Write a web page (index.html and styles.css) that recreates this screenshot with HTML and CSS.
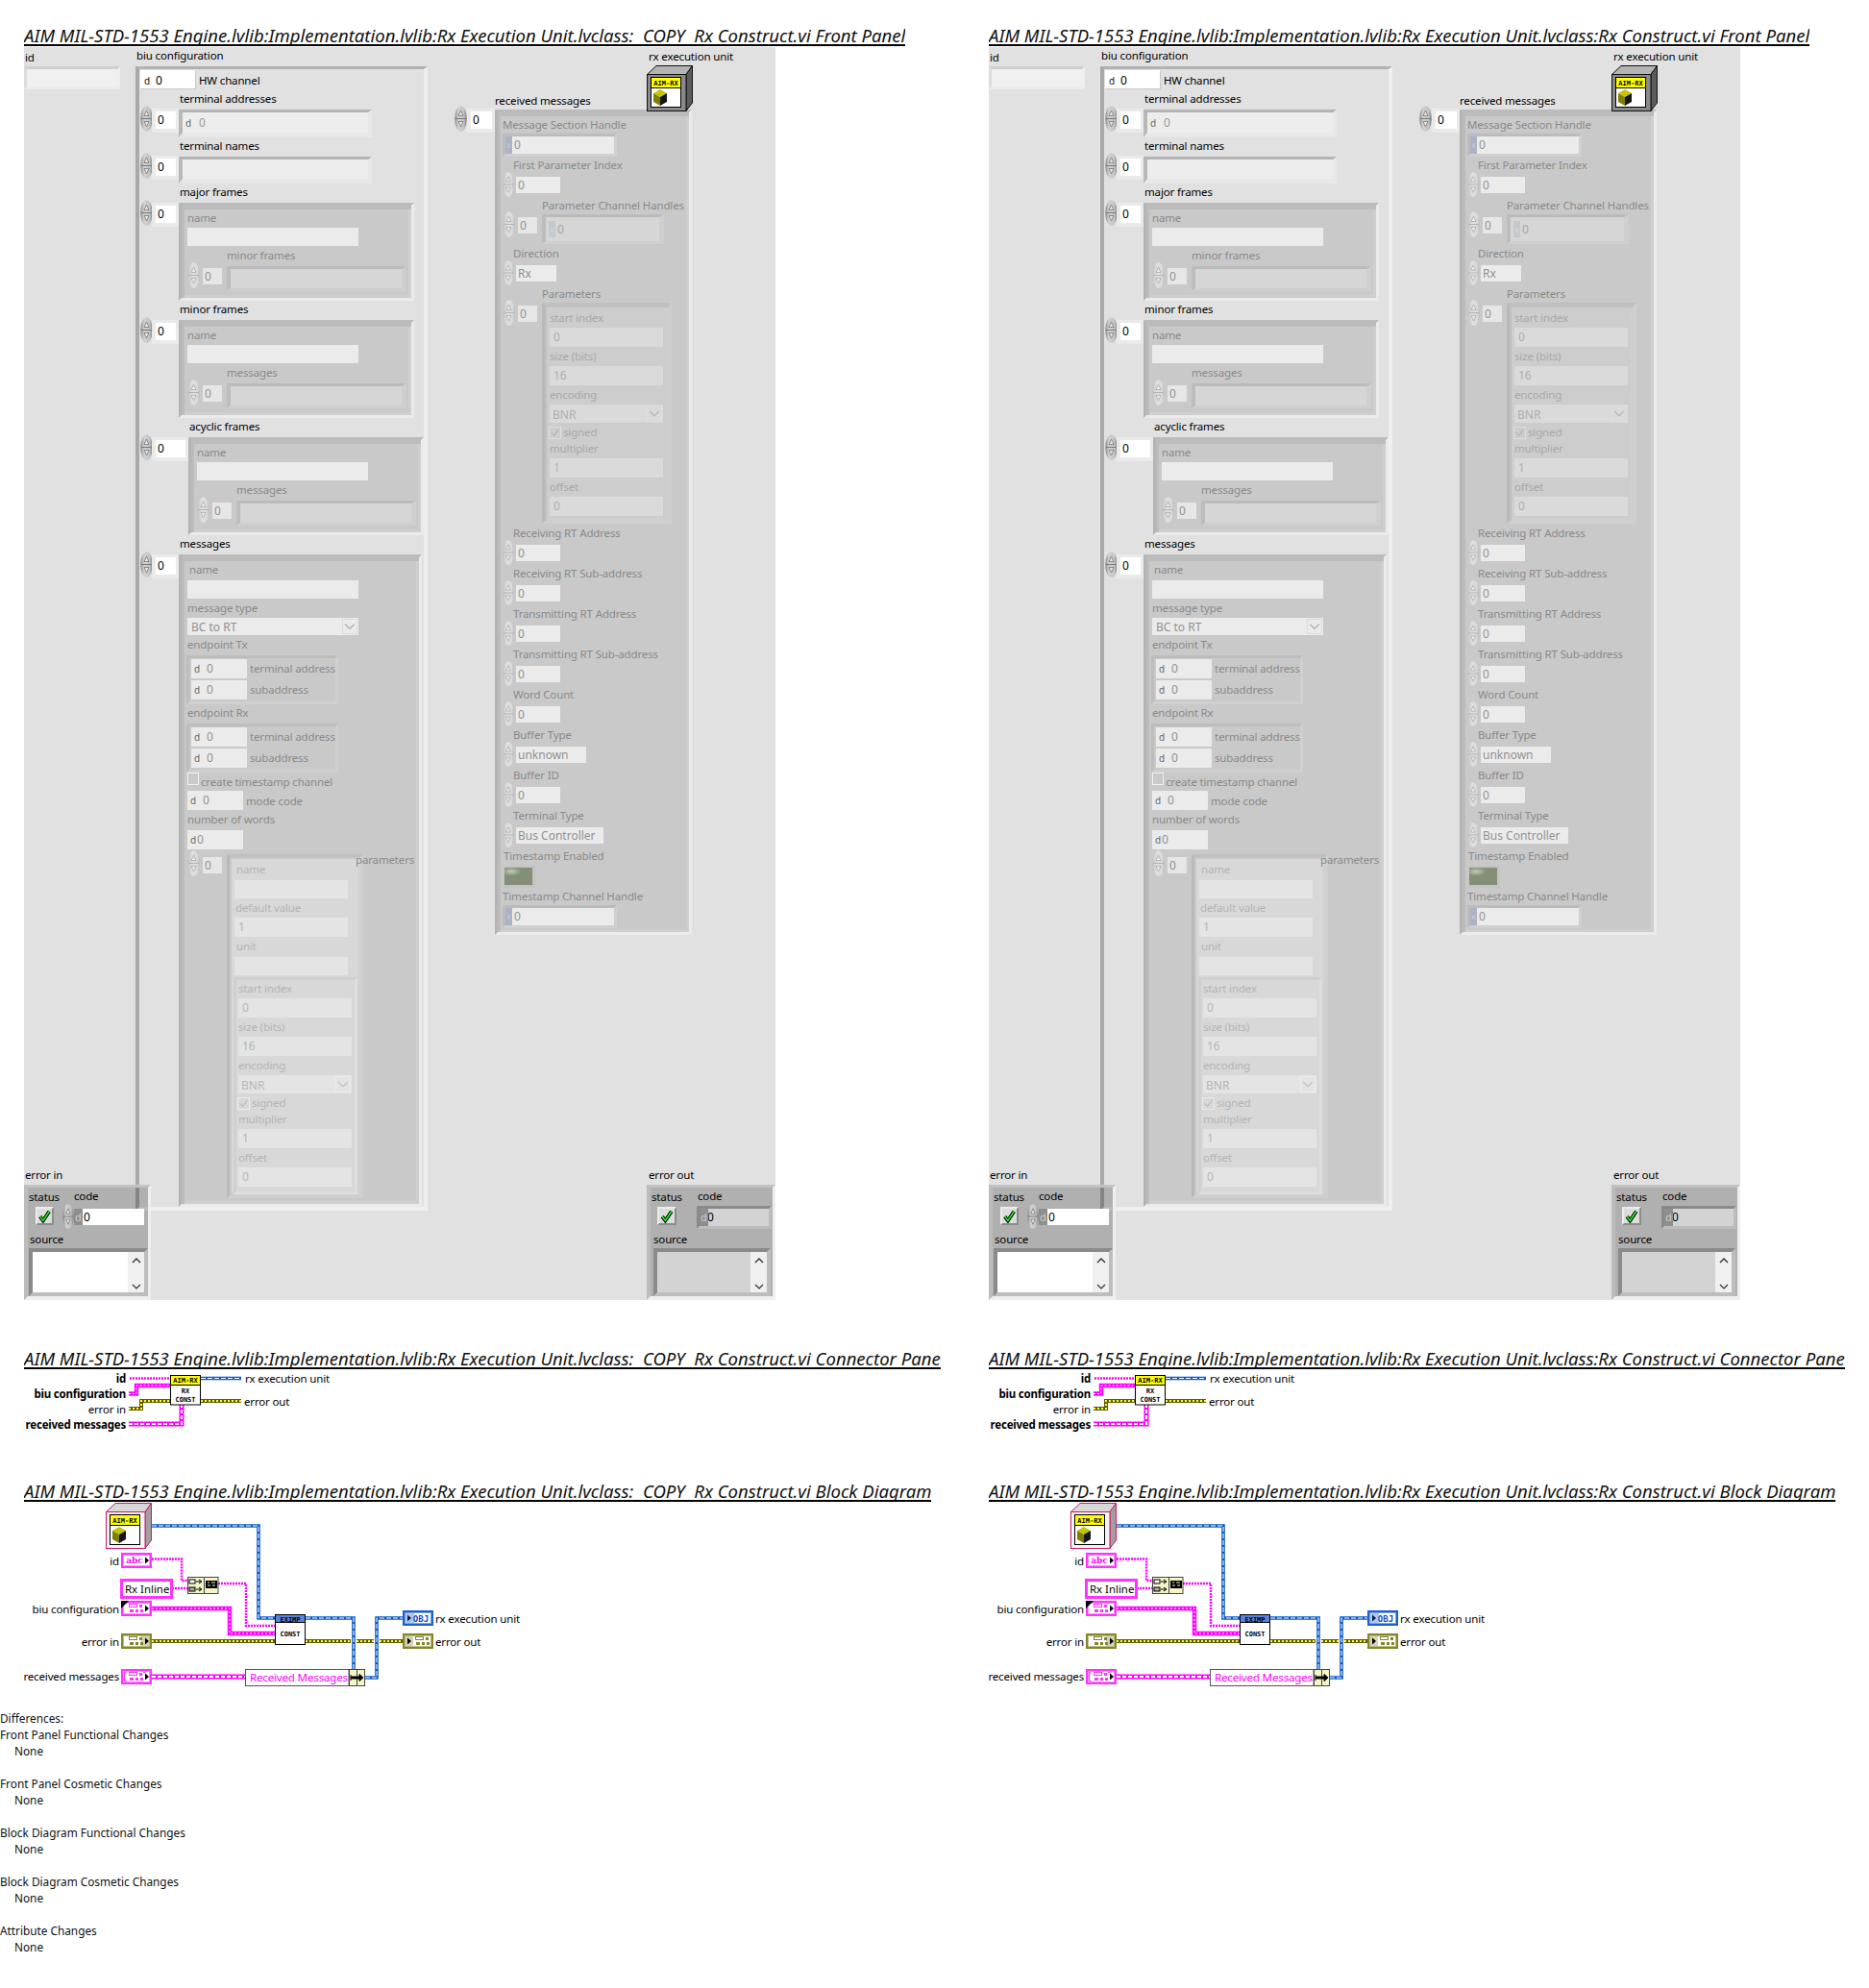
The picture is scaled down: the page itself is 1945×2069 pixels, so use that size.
FILE: index.html
```html
<!DOCTYPE html>
<html lang="en">
<head>
<meta charset="utf-8">
<title>VI comparison</title>
<link rel="stylesheet" href="styles.css">
</head>
<body>
<svg class="defs" width="0" height="0" aria-hidden="true">
  <defs>
    <linearGradient id="g-spin" x1="0" x2="1" y1="0" y2="0"><stop offset="0" stop-color="#8a8a8a"/><stop offset=".3" stop-color="#d2d2d2"/><stop offset=".75" stop-color="#c4c4c4"/><stop offset="1" stop-color="#7c7c7c"/></linearGradient>
    <linearGradient id="g-spin-d" x1="0" x2="1" y1="0" y2="0"><stop offset="0" stop-color="#c2c2c2"/><stop offset=".4" stop-color="#e0e0e0"/><stop offset=".8" stop-color="#dadada"/><stop offset="1" stop-color="#bcbcbc"/></linearGradient>
    <symbol id="spin" viewBox="0 0 13 27" preserveAspectRatio="none">
      <ellipse cx="6.5" cy="13.5" rx="6.3" ry="13.3" fill="url(#g-spin)"/>
      <path d="M1 13.5H12" stroke="#7a7a7a"/>
      <path d="M4 10.5L6.5 5 9 10.5Z" fill="#e6e6e6" stroke="#777" stroke-width=".8"/>
      <path d="M4 16.5L6.5 22 9 16.5Z" fill="#e6e6e6" stroke="#777" stroke-width=".8"/>
    </symbol>
    <symbol id="spin-d" viewBox="0 0 13 27" preserveAspectRatio="none">
      <ellipse cx="6.5" cy="13.5" rx="6.3" ry="13.3" fill="url(#g-spin-d)"/>
      <path d="M1 13.5H12" stroke="#b4b4b4"/>
      <path d="M4 10.5L6.5 5 9 10.5Z" fill="#ececec" stroke="#aaa" stroke-width=".8"/>
      <path d="M4 16.5L6.5 22 9 16.5Z" fill="#ececec" stroke="#aaa" stroke-width=".8"/>
    </symbol>
    <symbol id="aim" viewBox="0 0 32 32">
      <rect x=".5" y=".5" width="31" height="31" fill="#fff" stroke="#000"/>
      <rect x="1" y="1" width="30" height="10" fill="#ff0"/>
      <path d="M0 11.5H32" stroke="#000"/>
      <text x="16" y="8.6" class="pix" text-anchor="middle">AIM-RX</text>
      <path d="M10 13L17 17 10 21 3 17Z" fill="#c4c400"/>
      <path d="M3 17L10 21V30L3 26Z" fill="#808000"/>
      <path d="M17 17L10 21V30L17 26Z" fill="#141414"/>
    </symbol>
    <symbol id="chev-d" viewBox="0 0 12 8"><path d="M2 2L6 6 10 2" fill="none" stroke="currentColor" stroke-width="1.2"/></symbol>
    <symbol id="chev-u" viewBox="0 0 12 8"><path d="M2 6L6 2 10 6" fill="none" stroke="currentColor" stroke-width="1.4"/></symbol>
    <symbol id="tick" viewBox="0 0 14 14"><path d="M2.5 7.5L5.5 11.5 11.5 2.5" fill="none" stroke="#000" stroke-width="3.4"/><path d="M2.5 7.5L5.5 11.5 11.5 2.5" fill="none" stroke="#22e622" stroke-width="1.6"/></symbol>
    <symbol id="tick-d" viewBox="0 0 14 14"><path d="M2.5 7L6 11 12 2.5" fill="none" stroke="currentColor" stroke-width="1.2"/></symbol>
  </defs>
</svg>

<main class="compare">
  <section class="vi">
    <h2 class="vi-title vi-title-first"><span>AIM MIL-STD-1553 Engine.lvlib:Implementation.lvlib:Rx Execution Unit.lvclass:  COPY  Rx Construct.vi Front Panel</span></h2>
    <div class="front-panel"></div>
    <h2 class="vi-title vi-title-cp"><span>AIM MIL-STD-1553 Engine.lvlib:Implementation.lvlib:Rx Execution Unit.lvclass:  COPY  Rx Construct.vi Connector Pane</span></h2>
    <div class="connector-pane"></div>
    <h2 class="vi-title"><span>AIM MIL-STD-1553 Engine.lvlib:Implementation.lvlib:Rx Execution Unit.lvclass:  COPY  Rx Construct.vi Block Diagram</span></h2>
    <div class="block-diagram"></div>
  </section>
  <section class="vi">
    <h2 class="vi-title vi-title-first"><span>AIM MIL-STD-1553 Engine.lvlib:Implementation.lvlib:Rx Execution Unit.lvclass:Rx Construct.vi Front Panel</span></h2>
    <div class="front-panel"></div>
    <h2 class="vi-title vi-title-cp"><span>AIM MIL-STD-1553 Engine.lvlib:Implementation.lvlib:Rx Execution Unit.lvclass:Rx Construct.vi Connector Pane</span></h2>
    <div class="connector-pane"></div>
    <h2 class="vi-title"><span>AIM MIL-STD-1553 Engine.lvlib:Implementation.lvlib:Rx Execution Unit.lvclass:Rx Construct.vi Block Diagram</span></h2>
    <div class="block-diagram"></div>
  </section>
</main>

<section class="diff">
  <p class="diff-head">Differences:</p>
  <p>Front Panel Functional Changes<br><span class="diff-none">None</span></p>
  <p>Front Panel Cosmetic Changes<br><span class="diff-none">None</span></p>
  <p>Block Diagram Functional Changes<br><span class="diff-none">None</span></p>
  <p>Block Diagram Cosmetic Changes<br><span class="diff-none">None</span></p>
  <p>Attribute Changes<br><span class="diff-none">None</span></p>
</section>
<script src="app.js"></script>
</body>
</html>
```
FILE: styles.css
```css
* { box-sizing: border-box; }
html, body { margin: 0; background: #fff; }
body { font-family: "Noto Sans", "Open Sans", sans-serif; color: #000; }
.defs { position: absolute; }

.compare { display: grid; grid-template-columns: 1004px 1fr; padding-left: 25px; }
.vi { min-width: 0; }

.vi-title { margin: 0 0 1px; height: 25px; font-size: 18.55px; font-weight: 400; font-style: italic; line-height: 28px; white-space: pre; color: #111; }
.vi-title span { display: inline-block; height: 25px; border-bottom: 2px solid #000; overflow: hidden; }
.vi-title-first { margin-top: 23px; }
.vi-title-cp { margin-top: 47px; }

.front-panel { position: relative; width: 782px; height: 1304px; background: #e1e1e1; }
.connector-pane { height: 112px; }
.block-diagram { height: 202px; }
.connector-pane svg, .block-diagram svg { display: block; overflow: visible; }

/* LabVIEW front panel: a free canvas */
.lbl, .box, .spin, .use { position: absolute; }
.lbl { height: 16px; font-size: 11.5px; letter-spacing: -.15px; line-height: 16px; white-space: nowrap; }
.t0 { color: #000; }
.t1 { color: #8a8a8a; }
.t2 { color: #b4b4b4; }
.t3 { color: #a8a8a8; }
.box { font-size: 12px; white-space: nowrap; overflow: hidden; }
.radix { position: absolute; top: 0; left: 3px; font-size: 10px; color: #666; }
.num-w .radix { color: #111; }

.str-ind { border: 3px solid; border-color: #cfcfcf #eeeeee #ececec #dcdcdc; background: #f0f0f0; }
.biu { border: solid; border-width: 3px 4px 4px 4px; border-color: #b2b2b2 #efefef #efefef #a9a9a9; }
.num-w { background: #fff; border: 1px solid; border-color: #fff #c8c8c8 #c8c8c8 #fff; color: #000; }
.idx { border: solid; border-width: 3px 3px 4px 4px; border-color: #eaeaea; background: #fff; color: #000; }
.elem { border: solid; border-width: 3px 4px 5px 4px; border-color: #b4b4b4 #e8e8e8 #e8e8e8 #b8b8b8; background: #ededed; color: #999; }
.cl { border: 3px solid; border-color: #bbbbbb #ebebeb #ebebeb #b4b4b4; background: #c9c9c9; box-shadow: inset 3px 4px 0 #bcbcbc, inset -3px -3px 0 #cfcfcf; }
.fld { background: #ebebeb; color: #919191; }
.ring-text { padding-top: 1px; }
.fld-d { background: #d6d6d6; color: #a6a6a6; }
.sub-elem { border: solid; border-width: 3px 5px 3px 4px; border-color: #bbbbbb #cfcfcf #cfcfcf #bdbdbd; background: #d6d6d6; }
.idx-t1 { background: #e6e6e6; color: #919191; }
.group { border: 3px solid; border-color: #bdbdbd #d0d0d0 #d0d0d0 #bdbdbd; background: #c9c9c9; }
.chk { border: 1px solid #f0f0f0; background: transparent; }
.ring-btn { border: 1px solid #dddddd; background: #ebebeb; color: #b0b0b0; }
.num-frame { border: 3px solid; border-color: #bcbcbc #d0d0d0 #d0d0d0 #bcbcbc; background: #ebebeb; color: #919191; }
.hexp { position: absolute; left: 0; top: 0; bottom: 0; width: 7px; background: #aab2c4; color: #ccd; font-size: 9px; text-align: center; }
.hexp-d { background: #c4c8d0; color: #d8d8dc; }

.par-frame { border: 3px solid; border-color: #bfbfbf #cfcfcf #cfcfcf #b9b9b9; background: #d8d8d8; box-shadow: inset 2px 2px 0 #c8c8c8, inset -3px -3px 0 #d2d2d2; }
.par-inner { border: 3px solid; border-color: #d0d0d0 #dedede #dedede #d0d0d0; background: #d8d8d8; }
.par-fld { background: #e4e4e4; color: #b6b6b6; }
.par-chk { border: 1px solid #ececec; color: #b0b0b0; }
.par-btn { border: 1px solid #ececec; background: #e4e4e4; color: #c4c4c4; }
.rcv-frame { background: #cdcdcd; box-shadow: inset 2px 2px 0 #c0c0c0, inset -3px -3px 0 #cfcfcf; }
.rcv-fld { background: #dadada; color: #aeaeae; }
.rcv-chk { border-color: #dedede; color: #a8a8a8; }
.rcv-btn { background: #dadada; border-color: #dedede; color: #b8b8b8; }

.led-frame { background: #c3c3c3; }
.led { background: radial-gradient(ellipse 12px 5px at 7px 4px, #c2ccb8, #838f76 90%); }

.err { border: solid; border-width: 3px 3px 4px 4px; border-color: #c2c2c2 #efefef #efefef #bcbcbc; background: rgba(0, 0, 0, .215); background-clip: padding-box; }
.stat { border: 2px solid; border-color: #ededed #8c8c8c #8c8c8c #ededed; background: #dcdcdc; }
.code-w { background: #fff; color: #000; }
.code-p { position: absolute; left: 0; top: 0; bottom: 0; width: 9px; background: #8e8e8e; color: #cfcfcf; font-size: 11px; text-align: center; }
.code-f { border: 3px solid; border-color: #8a8a8a #bcbcbc #bcbcbc #8a8a8a; background: #d3d3d3; color: #000; }
.src { border: 4px solid; border-color: #8a8a8a #bdbdbd #bdbdbd #8a8a8a; background: #fff; }
.src-out { background: #d3d3d3; }
.src-bar { position: absolute; right: 0; top: 0; bottom: 0; width: 17px; background: #f0f0f0; color: #333; }
.src-bar svg { position: absolute; left: 3px; width: 12px; height: 8px; }
.src-bar .up { top: 5px; }
.src-bar .dn { bottom: 2px; }
.use { display: block; }
.fill { width: 100%; height: 100%; display: block; }

/* Wires and nodes */
.pix { font: 700 7px "DejaVu Sans Mono", monospace; fill: #000; }
.dlbl { font: 11.5px "Noto Sans", sans-serif; letter-spacing: -.15px; fill: #000; }
.dlbl-b { font-weight: 700; letter-spacing: -.22px; }
.w { fill: none; }
.w-str { stroke: #ff00ff; stroke-width: 2.4; stroke-dasharray: 2 1; }
.w-clu0 { stroke: #ff00ff; stroke-width: 4.4; }
.w-clu1 { stroke: #fff; stroke-width: 1; stroke-dasharray: 2 2; }
.w-arr0 { stroke: #ff00ff; stroke-width: 5; }
.w-arr1 { stroke: #fff; stroke-width: 2; stroke-dasharray: 4 2; }
.w-err0 { stroke: #5e5e00; stroke-width: 4; }
.w-err1 { stroke: #ffff33; stroke-width: 2; stroke-dasharray: 2 2; }
.w-cls0 { stroke: #0a5ac8; stroke-width: 3.6; }
.w-cls1 { stroke: #fff; stroke-width: 1; stroke-dasharray: 5 2; }
.n-yellow { fill: #f5f5c8; stroke: #444; }
.n-text { font: 11.6px "Noto Sans", sans-serif; letter-spacing: -.2px; fill: #ff00ff; }
.n-const { font: 11.4px "Noto Sans", sans-serif; fill: #000; }
.t-abc { font: 700 9px "DejaVu Serif", serif; }
.t-obj { font: 700 9px "DejaVu Sans Mono", monospace; fill: #0a4ac0; }

/* Differences list */
.diff { margin-top: 14px; font-size: 11.8px; line-height: 17px; color: #111; padding-bottom: 20px; }
.diff p { margin: 0 0 17px; }
.diff .diff-head { margin: 0; }
.diff-none { padding-left: 15px; }
```
FILE: app.js
```js
(function () {
  var PX = 25, PY = 49;
  var NS = 'http://www.w3.org/2000/svg';

  function useIcon(parent, id, cls, x1, y1, x2, y2) {
    var s = document.createElementNS(NS, 'svg');
    s.setAttribute('class', cls);
    if (x1 !== undefined) {
      s.style.left = x1 + 'px'; s.style.top = y1 + 'px';
      s.style.width = (x2 - x1) + 'px'; s.style.height = (y2 - y1) + 'px';
    }
    var u = document.createElementNS(NS, 'use');
    u.setAttribute('href', '#' + id);
    s.appendChild(u);
    parent.appendChild(s);
    return s;
  }

  function buildFront(c) {
    function box(x1, y1, x2, y2, cls, text, pad, radix) {
      var d = document.createElement('div');
      d.className = 'box ' + cls;
      d.style.left = (x1 - PX) + 'px'; d.style.top = (y1 - PY) + 'px';
      d.style.width = (x2 - x1) + 'px'; d.style.height = (y2 - y1) + 'px';
      if (text !== undefined && text !== null) {
        d.style.paddingLeft = (pad || 0) + 'px';
        d.style.lineHeight = (y2 - y1 - (/elem|idx |^idx$|frame|code-f/.test(cls) ? 7 : 0)) + 'px';
        d.appendChild(document.createTextNode(text));
      }
      if (radix) {
        var r = document.createElement('span');
        r.className = radix === 'x' ? 'hexp' : 'radix';
        if (radix === 'xd') { r.className = 'hexp hexp-d'; radix = 'x'; }
        r.textContent = radix;
        d.appendChild(r);
      }
      c.appendChild(d);
      return d;
    }
    function lab(x, cy, text, tone) {
      var s = document.createElement('span');
      s.className = 'lbl t' + (tone || 0);
      s.style.left = (x - PX) + 'px'; s.style.top = (cy - 8 - PY) + 'px';
      s.textContent = text;
      c.appendChild(s);
    }
    function spin(x, y, tone, w, h) {
      useIcon(c, tone ? 'spin-d' : 'spin', 'spin', x - PX, y - PY, x - PX + (w || 13), y - PY + (h || 27));
    }
    function arr(x, y, xr) {
      spin(146, y, 0);
      box(158, y + 3, xr, y + 28, 'idx', '0', 2);
    }
    function ring(x1, y1, x2, y2, text, fld, btn, pad) {
      box(x1, y1, x2, y2, fld + ' ring-text', text, pad);
      var b = box(x2 - 17, y1 + 1, x2 - 1, y2 - 1, btn);
      useIcon(b, 'chev-d', 'fill');
    }
    function check(x1, y1, x2, y2, cls, on) {
      var b = box(x1, y1, x2, y2, cls);
      if (on) useIcon(b, 'tick-d', 'fill');
    }
    function frameBlock(x, y, title, sub) {
      lab(x + 1, y - 11, title);
      arr(146, y - 3, x);
      box(x, y, x + 245, y + 102, 'cl');
      lab(x + 9, y + 16, 'name', 1);
      box(x + 9, y + 26, x + 187, y + 45, 'fld');
      lab(x + 50, y + 55, sub, 1);
      spin(x + 9, y + 62, 1);
      box(x + 25, y + 68, x + 45, y + 85, 'idx-t1', '0', 2);
      box(x + 50, y + 66, x + 237, y + 92, 'sub-elem');
    }
    function param(dx, dy, fld, chk, btn, tone) {
      var rows = [['start index', 1029, '0'], ['size (bits)', 1069, '16'], ['encoding', 1109], ['multiplier', 1165, '1'], ['offset', 1205, '0']];
      rows.forEach(function (r) {
        lab(248 + dx, r[1] + dy, r[0], tone);
        if (r[2]) box(248 + dx, r[1] + 10 + dy, 366 + dx, r[1] + 30 + dy, fld, r[2], 4);
      });
      ring(248 + dx, 1119 + dy, 366 + dx, 1138 + dy, 'BNR', fld, btn, 3);
      check(247 + dx, 1142 + dy, 260 + dx, 1155 + dy, chk, true);
      lab(262 + dx, 1148 + dy, 'signed', tone);
    }

    /* id */
    lab(26, 60, 'id');
    box(25, 69, 125, 93, 'str-ind');

    /* biu configuration */
    lab(142, 58, 'biu configuration');
    box(141, 69, 445, 1260, 'biu');
    box(146, 73, 204, 93, 'num-w', '0', 15, 'd');
    lab(207, 84, 'HW channel');
    lab(187, 103, 'terminal addresses');
    arr(146, 110, 186);
    box(186, 114, 387, 143, 'elem', '0', 17, 'd');
    lab(187, 152, 'terminal names');
    arr(146, 159, 186);
    box(186, 163, 387, 191, 'elem');
    frameBlock(186, 211, 'major frames', 'minor frames');
    frameBlock(186, 333, 'minor frames', 'messages');
    frameBlock(196, 455, 'acyclic frames', 'messages');

    /* messages */
    lab(187, 566, 'messages');
    arr(146, 574, 186);
    box(186, 577, 439, 1256, 'cl');
    lab(197, 593, 'name', 1);
    box(195, 604, 373, 623, 'fld');
    lab(195, 633, 'message type', 1);
    ring(195, 643, 373, 661, 'BC to RT', 'fld', 'ring-btn', 4);
    [['endpoint Tx', 671], ['endpoint Rx', 742]].forEach(function (e) {
      var y = e[1];
      lab(195, y, e[0], 1);
      box(194, y + 11, 352, y + 62, 'group');
      box(199, y + 15, 257, y + 35, 'fld', '0', 16, 'd');
      box(199, y + 37, 257, y + 57, 'fld', '0', 16, 'd');
      lab(260, y + 25, 'terminal address', 1);
      lab(260, y + 47, 'subaddress', 1);
    });
    check(195, 804, 207, 817, 'chk', false);
    lab(209, 814, 'create timestamp channel', 1);
    box(195, 823, 253, 843, 'fld', '0', 16, 'd');
    lab(256, 834, 'mode code', 1);
    lab(195, 853, 'number of words', 1);
    box(195, 864, 253, 884, 'fld', '0', 10, 'd');

    /* parameters */
    spin(195, 885, 1);
    box(211, 892, 231, 909, 'idx-t1', '0', 2);
    box(236, 889, 378, 1247, 'par-frame');
    lab(370, 895, 'parameters', 1);
    lab(246, 905, 'name', 2);
    box(244, 916, 362, 935, 'par-fld');
    lab(245, 945, 'default value', 2);
    box(244, 955, 362, 975, 'par-fld', '1', 4);
    lab(246, 985, 'unit', 2);
    box(244, 996, 362, 1015, 'par-fld');
    box(243, 1017, 372, 1243, 'par-inner');
    param(0, 0, 'par-fld', 'par-chk', 'par-btn', 2);

    /* received messages */
    lab(515, 105, 'received messages');
    spin(473, 110, 0);
    box(486, 113, 515, 138, 'idx', '0', 2);
    box(515, 114, 720, 973, 'cl');
    lab(523, 130, 'Message Section Handle', 1);
    box(523, 139, 642, 163, 'num-frame', '0', 9, 'x');
    lab(534, 172, 'First Parameter Index', 1);
    spin(523, 179, 1, 12, 26);
    box(537, 184, 583, 201, 'fld', '0', 2);
    lab(564, 214, 'Parameter Channel Handles', 1);
    spin(523, 220, 1);
    box(539, 226, 559, 243, 'idx-t1', '0', 2);
    box(564, 223, 691, 254, 'sub-elem');
    box(571, 230, 683, 247, 'fld-d', '0', 9, 'xd');
    lab(534, 264, 'Direction', 1);
    spin(523, 271, 1, 12, 26);
    box(537, 276, 579, 293, 'fld', 'Rx', 2);
    lab(564, 306, 'Parameters', 1);
    spin(523, 312, 1);
    box(539, 318, 559, 335, 'idx-t1', '0', 2);
    box(564, 315, 699, 545, 'par-frame rcv-frame');
    param(324, -698, 'rcv-fld', 'par-chk rcv-chk', 'par-btn rcv-btn', 3);

    [['Receiving RT Address', '0', 583], ['Receiving RT Sub-address', '0', 583], ['Transmitting RT Address', '0', 583],
     ['Transmitting RT Sub-address', '0', 583], ['Word Count', '0', 583], ['Buffer Type', 'unknown', 610],
     ['Buffer ID', '0', 583], ['Terminal Type', 'Bus Controller', 628]].forEach(function (r, i) {
      var y = 555 + 42 * i;
      lab(534, y, r[0], 1);
      spin(523, y + 7, 1, 12, 26);
      box(537, y + 12, r[2], y + 29, 'fld', r[1], 2);
    });
    lab(524, 891, 'Timestamp Enabled', 1);
    box(524, 901, 557, 924, 'led-frame');
    box(525, 903, 554, 921, 'led');
    lab(523, 933, 'Timestamp Channel Handle', 1);
    box(523, 942, 642, 966, 'num-frame', '0', 9, 'x');

    /* error clusters */
    function errCluster(x, isOut) {
      lab(isOut ? 675 : 26, 1223, isOut ? 'error out' : 'error in');
      box(x, 1233, isOut ? 807 : 157, 1353, 'err');
      lab(30 + (isOut ? 648 : 0), 1246, 'status');
      lab(77 + (isOut ? 649 : 0), 1245, 'code');
      var b = box(37 + (isOut ? 647 : 0), 1256, 56 + (isOut ? 648 : 0), 1275, 'stat');
      useIcon(b, 'tick', 'fill');
      if (!isOut) {
        spin(65, 1253, 0, 12, 26);
        var w = box(77, 1258, 150, 1275, 'code-w', '0', 10);
        var p = document.createElement('span');
        p.className = 'code-p'; p.textContent = 'd';
        w.appendChild(p);
      } else {
        var f = box(725, 1255, 803, 1279, 'code-f', '0', 8);
        var q = document.createElement('span');
        q.className = 'code-p'; q.textContent = 'd';
        f.appendChild(q);
      }
      lab(31 + (isOut ? 649 : 0), 1290, 'source');
      var s = box(30 + (isOut ? 650 : 0), 1299, 154 + (isOut ? 648 : 0), 1349, isOut ? 'src src-out' : 'src');
      var bar = document.createElement('div');
      bar.className = 'src-bar';
      s.appendChild(bar);
      useIcon(bar, 'chev-u', 'up');
      useIcon(bar, 'chev-d', 'dn');
    }
    errCluster(25, false);
    errCluster(673, true);

    /* rx execution unit */
    lab(675, 59, 'rx execution unit');
    var cv = document.createElementNS(NS, 'svg');
    cv.setAttribute('class', 'use');
    cv.setAttribute('viewBox', '0 0 48 48');
    cv.style.left = (673 - PX) + 'px'; cv.style.top = (68 - PY) + 'px';
    cv.style.width = '48px'; cv.style.height = '48px';
    cv.innerHTML = classIcon('#8a8a8a', '#b4b4b4', '#5c5c5c', '#111');
    c.appendChild(cv);
  }

  function classIcon(front, top, right, stroke) {
    return '<path d="M.5 9.5L10 .5H47.5L41 9.5Z" fill="' + top + '" stroke="' + stroke + '"/>' +
      '<path d="M41 9.5L47.5 .5V39L41 47.5Z" fill="' + right + '" stroke="' + stroke + '"/>' +
      '<rect x=".5" y="9.5" width="40.5" height="38" fill="' + front + '" stroke="' + stroke + '"/>' +
      '<use href="#aim" x="4" y="12" width="32" height="32"/>';
  }

  function wire(type, d) {
    if (type === 'str') return '<path class="w w-str" d="' + d + '"/>';
    return '<path class="w w-' + type + '0" d="' + d + '"/><path class="w w-' + type + '1" d="' + d + '"/>';
  }

  function clusterGlyph(col, x) {
    return '<g transform="translate(' + x + ' 0)"><rect x=".5" y="3.5" width="8" height="3" fill="none" stroke="' + col + '"/>' +
      '<rect x="11" y="4" width="3" height="3" fill="' + col + '"/><rect x="1" y="9" width="4" height="3" fill="' + col + '"/>' +
      '<rect x="7" y="9" width="3" height="3" fill="' + col + '"/><rect x="12" y="9" width="3" height="3" fill="' + col + '"/></g>';
  }

  function terminal(x, y, col, body, arrowLeft, fillSide) {
    var a = arrowLeft
      ? '<path d="M5 4.5L9 8 5 11.5Z" fill="#000"/>'
      : '<path d="M25 4.5L29 8 25 11.5Z" fill="#000"/>';
    return '<g transform="translate(' + x + ' ' + y + ')">' +
      '<rect x="1" y="1" width="30" height="14" fill="#fff" stroke="' + col + '" stroke-width="2"/>' +
      '<rect x="2.5" y="2.5" width="27" height="11" fill="none" stroke="' + col + '" stroke-opacity=".55"/>' +
      (fillSide ? '<rect x="' + fillSide + '" y="3" width="8" height="10" fill="' + col + '" fill-opacity=".35"/>' : '') +
      body + a + '</g>';
  }

  var CP = '<svg width="700" height="112" viewBox="25 1426 700 112">' +
    wire('str', 'M135 1434.5H177') +
    wire('clu', 'M134 1450.5H142V1442H177') +
    wire('err', 'M134 1466H147V1458H177') +
    wire('arr', 'M134 1482H189V1462') +
    wire('cls', 'M209 1434.5H251') +
    wire('err', 'M209 1458H251') +
    '<rect x="177.5" y="1431.5" width="31" height="30.5" fill="#fff" stroke="#000"/>' +
    '<rect x="178" y="1432" width="30" height="9" fill="#ff0"/><path d="M177 1441.5H209" stroke="#000"/>' +
    '<text x="193" y="1439.4" class="pix" text-anchor="middle">AIM-RX</text>' +
    '<text x="193" y="1449.5" class="pix" text-anchor="middle">RX</text>' +
    '<text x="193" y="1458.5" class="pix" text-anchor="middle">CONST</text>' +
    '<text x="131" y="1439" class="dlbl dlbl-b" text-anchor="end">id</text>' +
    '<text x="131" y="1455" class="dlbl dlbl-b" text-anchor="end">biu configuration</text>' +
    '<text x="131" y="1471" class="dlbl" text-anchor="end">error in</text>' +
    '<text x="131" y="1487" class="dlbl dlbl-b" text-anchor="end">received messages</text>' +
    '<text x="255" y="1438.5" class="dlbl">rx execution unit</text>' +
    '<text x="254" y="1462.5" class="dlbl">error out</text>' +
    '</svg>';

  var PINK = '#ff33ff', OLIVE = '#85852a', BLUE = '#1a5fd0';
  var BD = '<svg width="700" height="202" viewBox="25 1564 700 202">' +
    wire('err', 'M158 1708H286') + wire('err', 'M318 1708H365') + wire('err', 'M371 1708H389') + wire('err', 'M395 1708H419') +
    wire('cls', 'M158 1588H269V1684H286') +
    wire('str', 'M158 1622.5H189V1645H195') +
    wire('str', 'M179 1653H195') +
    wire('str', 'M227 1648H256V1692H286') +
    wire('clu', 'M158 1674H239V1700H286') +
    wire('arr', 'M158 1745H255') +
    wire('cls', 'M318 1684H368V1737') +
    wire('cls', 'M380 1746H392V1684H419') +

    /* class control */
    '<svg x="110" y="1564" width="48" height="48" viewBox="0 0 48 48">' + classIcon('#f4f4f4', '#d8d8d8', '#a0a0a0', '#cc1a66') + '</svg>' +

    terminal(126, 1616, PINK, '<text x="14" y="11" text-anchor="middle" class="t-abc" fill="#ff00ff">abc</text>') +
    '<rect x="126.5" y="1644.5" width="52" height="18" fill="#fff" stroke="#ff33ff" stroke-width="3"/>' +
    '<text x="130" y="1658" class="n-const">Rx Inline</text>' +
    terminal(126, 1666, PINK, clusterGlyph('#ff33ff', 8)) +
    '<path d="M126 1666H134L126 1674Z" fill="#000"/>' +
    terminal(126, 1700, OLIVE, clusterGlyph(OLIVE, 8), false, 21) +
    terminal(126, 1737, PINK, '<path d="M5.5 3.5H3.5V12.5H5.5M25.5 3.5H23" fill="none" stroke="#ff33ff"/>' + clusterGlyph('#ff33ff', 8)) +
    terminal(419, 1676, BLUE, '<text x="19" y="11.5" text-anchor="middle" class="t-obj">OBJ</text>', true) +
    '<rect x="422" y="1679" width="9" height="10" fill="#1a5fd0" fill-opacity=".35"/>' +
    terminal(419, 1700, OLIVE, clusterGlyph(OLIVE, 13), true, 3) +

    /* concatenate node */
    '<rect x="195.5" y="1641.5" width="31.5" height="17" class="n-yellow"/><path d="M212.5 1641V1658" stroke="#444"/>' +
    '<rect x="197" y="1644" width="6" height="4" fill="#fff" stroke="#000"/><path d="M204 1646H209M207 1644L210 1646 207 1648" fill="none" stroke="#000"/>' +
    '<rect x="197" y="1652" width="6" height="4" fill="#aaa" stroke="#000"/><path d="M204 1654H209M207 1652L210 1654 207 1656" fill="none" stroke="#000"/>' +
    '<rect x="214" y="1645" width="12" height="8" fill="#000"/><path d="M216 1647H218M220 1647H224M216 1650H219M221 1650H224" stroke="#f5f5c8"/>' +

    /* EXIMP node */
    '<rect x="286.5" y="1680.5" width="31" height="31" fill="#fff" stroke="#000"/>' +
    '<rect x="287" y="1681" width="30" height="8" fill="#5a82dc"/><path d="M286 1688.5H318" stroke="#000"/>' +
    '<text x="302" y="1687.5" class="pix" text-anchor="middle">EXIMP</text>' +
    '<text x="302" y="1703" class="pix" text-anchor="middle">CONST</text>' +

    /* Received Messages constant + bundle */
    '<rect x="255.5" y="1737.5" width="107.5" height="17" fill="#fff" stroke="#555"/>' +
    '<text x="260" y="1750" class="n-text">Received Messages</text>' +
    '<rect x="363.5" y="1737.5" width="8" height="17" class="n-yellow"/><rect x="371.5" y="1737.5" width="8" height="17" class="n-yellow"/>' +
    '<path d="M365 1746H376" stroke="#000" stroke-width="3"/><path d="M365 1743V1749M374 1742.5L378 1746 374 1749.5Z" fill="#000" stroke="#000"/>' +

    '<text x="124" y="1628.5" class="dlbl" text-anchor="end">id</text>' +
    '<text x="124" y="1679" class="dlbl" text-anchor="end">biu configuration</text>' +
    '<text x="124" y="1713" class="dlbl" text-anchor="end">error in</text>' +
    '<text x="124" y="1749" class="dlbl" text-anchor="end">received messages</text>' +
    '<text x="453" y="1688.5" class="dlbl">rx execution unit</text>' +
    '<text x="453" y="1712.5" class="dlbl">error out</text>' +
    '</svg>';

  document.querySelectorAll('.front-panel').forEach(buildFront);
  document.querySelectorAll('.connector-pane').forEach(function (n) { n.innerHTML = CP; });
  document.querySelectorAll('.block-diagram').forEach(function (n) { n.innerHTML = BD; });
})();
```
